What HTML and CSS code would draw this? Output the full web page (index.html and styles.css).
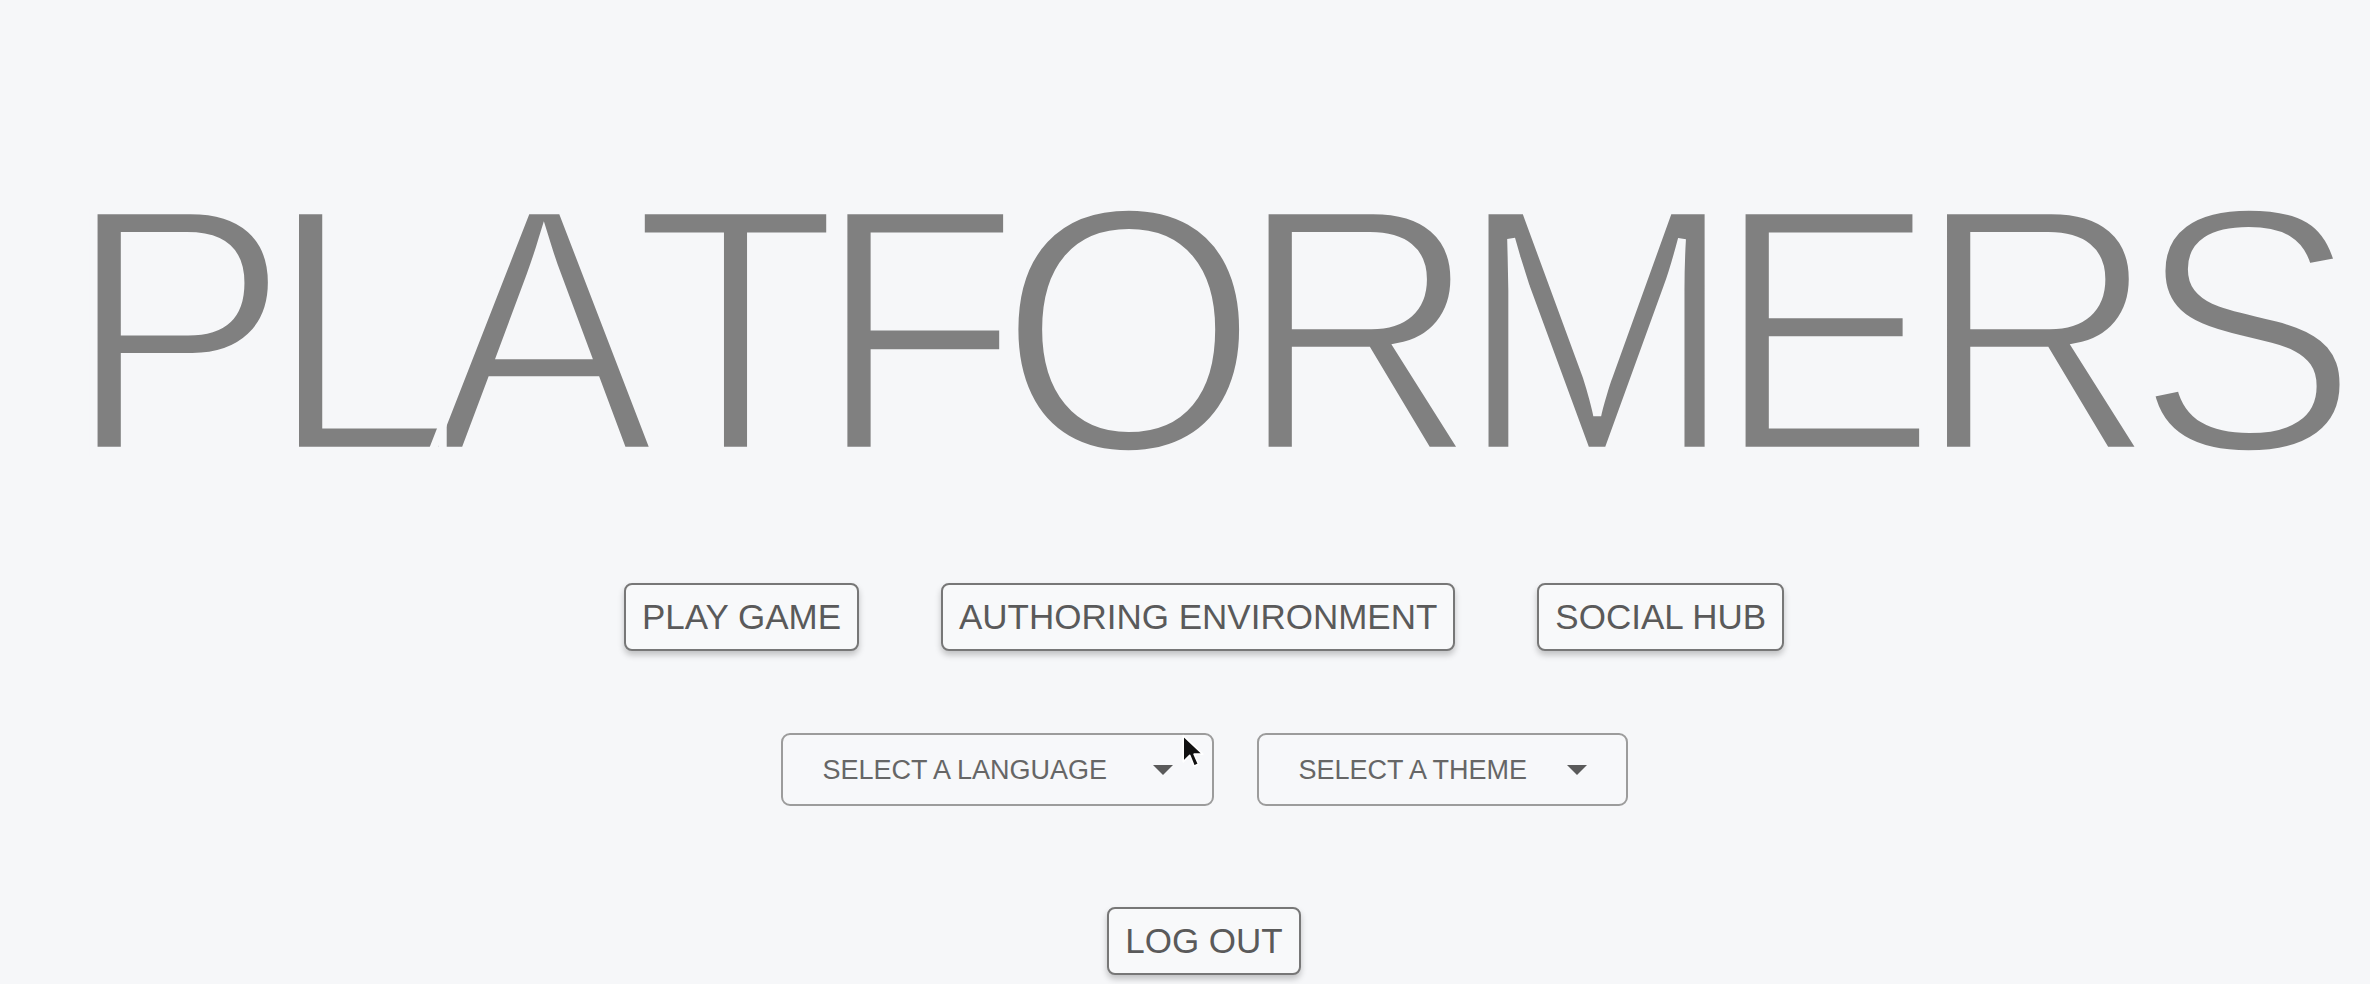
FILE: index.html
```html
<!DOCTYPE html>
<html lang="en">
<head>
<meta charset="utf-8">
<title>Platformers</title>
<link rel="stylesheet" href="styles.css">
</head>
<body>
<main class="menu">
  <h1 class="title">PLATFORMERS</h1>
  <div class="row row-main">
    <button class="btn">PLAY GAME</button>
    <button class="btn">AUTHORING ENVIRONMENT</button>
    <button class="btn">SOCIAL HUB</button>
  </div>
  <div class="row row-selects">
    <div class="select select-lang">
      <span class="select-label">SELECT A LANGUAGE</span>
      <span class="arrow"></span>
      <svg class="cursor" width="24" height="38" viewBox="0 0 22 34"><path d="M2 2 L2 26 L8 20 L12 30 L16 28 L12 19 L20 19 Z" fill="#111" stroke="#fff" stroke-width="1.5" stroke-linejoin="round"/></svg>
    </div>
    <div class="select select-theme">
      <span class="select-label">SELECT A THEME</span>
      <span class="arrow"></span>
    </div>
  </div>
  <div class="row row-logout">
    <button class="btn">LOG OUT</button>
  </div>
</main>
</body>
</html>
```

FILE: styles.css
```css
html, body {
  margin: 0;
  padding: 0;
  background: #f6f7f9;
  height: 100%;
  overflow: hidden;
}

.menu {
  display: flex;
  flex-direction: column;
  align-items: center;
  padding: 168px 0 0 38px;
  font-family: "Liberation Sans", Arial, sans-serif;
}

.title {
  margin: 0 5px 0 0;
  font-family: "Liberation Sans", Arial, sans-serif;
  font-weight: 400;
  font-size: 335px;
  line-height: 335px;
  letter-spacing: -22px;
  font-kerning: none;
  color: #808080;
  -webkit-text-stroke: 8px #f6f7f9;
  white-space: nowrap;
  transform: scaleY(1.045);
  transform-origin: 50% 84.7%;
}

.row {
  display: flex;
  justify-content: center;
  align-items: center;
}

.row-main {
  margin-top: 80px;
  gap: 82px;
}

.row-selects {
  margin-top: 82px;
  gap: 43px;
}

.row-logout {
  margin-top: 101px;
}

.btn {
  font-family: "Liberation Sans", Arial, sans-serif;
  font-size: 35px;
  line-height: 40px;
  color: #5a5a5a;
  background: #f8f9fa;
  border: 2px solid #777777;
  border-radius: 8px;
  padding: 12px 16px;
  box-shadow: 0 4px 6px rgba(0, 0, 0, 0.22);
  cursor: pointer;
}

.select {
  position: relative;
  display: flex;
  align-items: center;
  height: 69px;
  padding: 0 39px 0 40px;
  border: 2px solid #9c9c9c;
  border-radius: 9px;
  background: #f7f8fa;
  box-sizing: content-box;
}

.select-lang { width: 350px; }
.select-theme { width: 288px; }

.select-label {
  flex: 1;
  font-size: 27px;
  line-height: 32px;
  color: #666666;
  white-space: nowrap;
}

.arrow {
  width: 0;
  height: 0;
  border-left: 10px solid transparent;
  border-right: 10px solid transparent;
  border-top: 10px solid #5a5a5a;
  margin-left: 20px;
}

.cursor {
  position: absolute;
  left: 398px;
  top: -2px;
}
```
